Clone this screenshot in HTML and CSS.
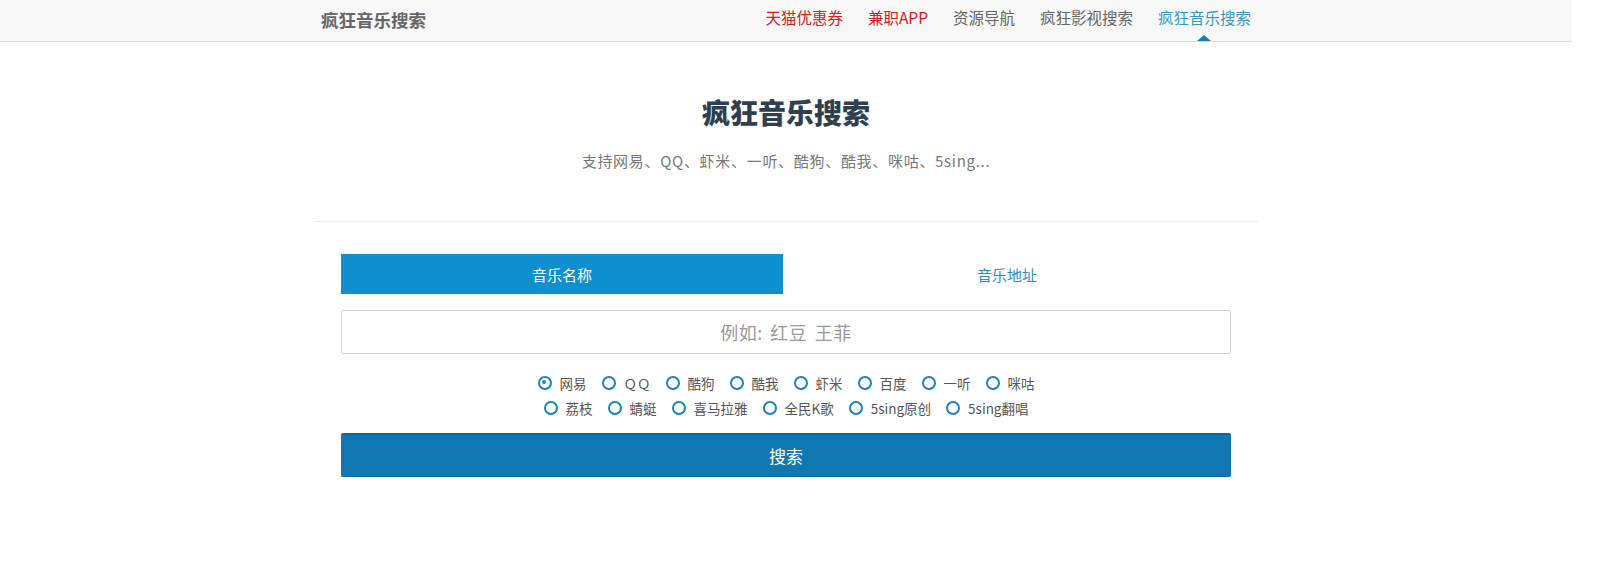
FILE: index.html
```html
<!DOCTYPE html>
<html lang="zh-CN">
<head>
<meta charset="utf-8">
<title>疯狂音乐搜索</title>
<link rel="stylesheet" href="styles.css">
</head>
<body>
<header class="navbar">
  <div class="nav-inner">
    <a class="brand">疯狂音乐搜索</a>
    <ul class="nav">
      <li class="red">天猫优惠券</li>
      <li class="red">兼职APP</li>
      <li>资源导航</li>
      <li>疯狂影视搜索</li>
      <li class="active">疯狂音乐搜索</li>
    </ul>
  </div>
</header>
<main class="container">
  <section class="hero">
    <h1 class="title">疯狂音乐搜索</h1>
    <p class="subtitle">支持网易、QQ、虾米、一听、酷狗、酷我、咪咕、5sing...</p>
  </section>
  <hr class="divider">
  <section class="search">
    <div class="tabs">
      <div class="tab tab-active">音乐名称</div>
      <div class="tab">音乐地址</div>
    </div>
    <input class="query" type="text" placeholder="例如: 红豆 王菲">
    <div class="radios">
      <div class="radio-row">
        <label class="radio"><span class="dot checked"></span>网易</label>
        <label class="radio"><span class="dot"></span>ＱＱ</label>
        <label class="radio"><span class="dot"></span>酷狗</label>
        <label class="radio"><span class="dot"></span>酷我</label>
        <label class="radio"><span class="dot"></span>虾米</label>
        <label class="radio"><span class="dot"></span>百度</label>
        <label class="radio"><span class="dot"></span>一听</label>
        <label class="radio"><span class="dot"></span>咪咕</label>
      </div>
      <div class="radio-row">
        <label class="radio"><span class="dot"></span>荔枝</label>
        <label class="radio"><span class="dot"></span>蜻蜓</label>
        <label class="radio"><span class="dot"></span>喜马拉雅</label>
        <label class="radio"><span class="dot"></span>全民K歌</label>
        <label class="radio"><span class="dot"></span>5sing原创</label>
        <label class="radio"><span class="dot"></span>5sing翻唱</label>
      </div>
    </div>
    <button class="submit" type="button">搜索</button>
  </section>
</main>
</body>
</html>
```
FILE: styles.css
```css
* { box-sizing: border-box; }
html, body { margin: 0; padding: 0; }
body {
  background: #fff;
  font-family: "Noto Sans CJK SC", "Noto Sans", "Liberation Sans", sans-serif;
  color: #333;
  padding-right: 28px;
}
.navbar {
  height: 42px;
  background: #f8f8f8;
  border-bottom: 1px solid #dcdcdc;
}
.nav-inner {
  width: 930px;
  margin: 0 auto;
  height: 41px;
  display: flex;
  align-items: center;
  justify-content: space-between;
}
.brand {
  font-size: 17.5px;
  font-weight: bold;
  color: #666;
  line-height: 34px;
  margin-top: -1px;
}
.nav {
  list-style: none;
  margin: 0;
  padding: 0;
  display: flex;
  gap: 25px;
  height: 41px;
  align-items: flex-start;
}
.nav li {
  position: relative;
  font-size: 15.5px;
  line-height: 34px;
  color: #666;
  height: 41px;
}
.nav li.red { color: #d8201c; }
.nav li.active { color: #3a98c4; }
.nav li.active::after {
  content: "";
  position: absolute;
  left: 50%;
  bottom: 0;
  margin-left: -7px;
  border-left: 7px solid transparent;
  border-right: 7px solid transparent;
  border-bottom: 6px solid #1b7fb3;
}
.container {
  width: 944px;
  margin: 0 auto;
}
.hero {
  text-align: center;
  padding-top: 50px;
}
.title {
  margin: 0;
  font-size: 28px;
  line-height: 40px;
  font-weight: 900;
  color: #2f3f50;
}
.subtitle {
  margin: 18px 0 0;
  font-size: 15px;
  line-height: 22px;
  color: #777;
  letter-spacing: 0.7px;
}
.divider {
  margin: 49px 0 0;
  border: 0;
  border-top: 1px solid #eee;
  height: 0;
}
.search {
  padding: 32px 27px 0;
}
.tabs {
  display: grid;
  grid-template-columns: 442px 1fr;
  height: 40px;
}
.tab {
  display: flex;
  align-items: center;
  justify-content: center;
  font-size: 15px;
  color: #2a8dbd;
}
.tab-active {
  background: #0f8fd0;
  color: #fff;
}
.query {
  display: block;
  width: 100%;
  height: 44px;
  margin-top: 16px;
  border: 1px solid #cfcfcf;
  border-radius: 2px;
  text-align: center;
  font-family: inherit;
  font-size: 18px;
  word-spacing: 3px;
  letter-spacing: 0.5px;
  color: #555;
  outline: none;
}
.query::placeholder { color: #999; }
.radios {
  margin-top: 16px;
}
.radio-row {
  display: flex;
  justify-content: center;
  gap: 15px;
  height: 25px;
  align-items: center;
}
.radio {
  display: flex;
  align-items: center;
  gap: 8px;
  font-size: 13.5px;
  line-height: 20px;
  color: #555;
}
.dot {
  width: 14px;
  height: 14px;
  border: 2.5px solid #1a86b4;
  border-radius: 50%;
  position: relative;
}
.dot.checked::after {
  content: "";
  position: absolute;
  left: 2.5px;
  top: 2.5px;
  width: 4px;
  height: 4px;
  border-radius: 50%;
  background: #1a86b4;
}
.submit {
  display: block;
  width: 100%;
  height: 44px;
  margin-top: 13px;
  background: #0f78b1;
  border: 0;
  border-top: 2px solid #0c6aa0;
  border-bottom: 1px solid #0d6b9f;
  border-radius: 2px;
  color: #fff;
  font-family: inherit;
  font-size: 17px;
}
```
